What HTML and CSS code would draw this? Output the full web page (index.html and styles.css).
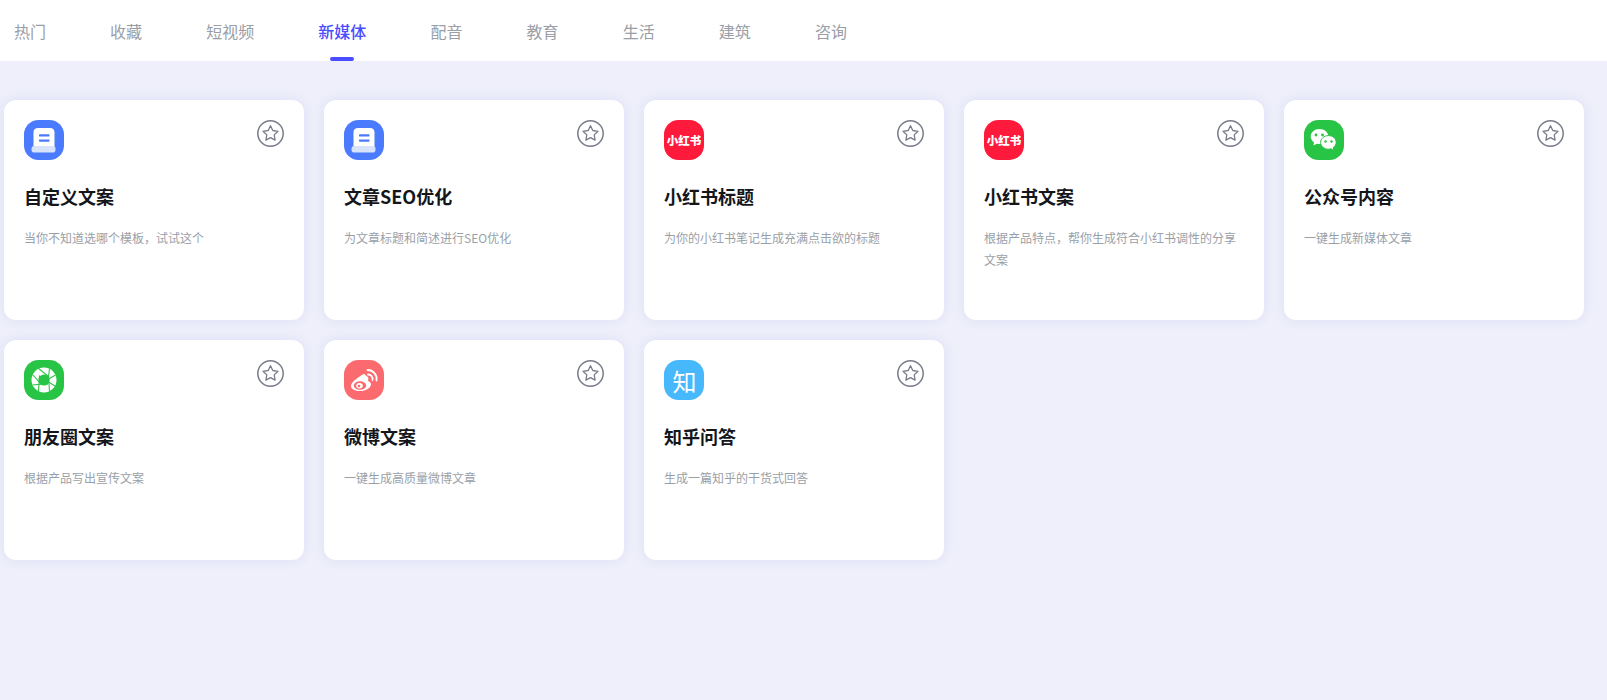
FILE: index.html
```html
<!DOCTYPE html>
<html lang="zh-CN">
<head>
<meta charset="utf-8">
<title>新媒体</title>
<link rel="stylesheet" href="styles.css">
</head>
<body>
<svg class="defs" width="0" height="0" aria-hidden="true">
  <symbol id="star" viewBox="0 0 27 27">
    <circle cx="13.5" cy="13.5" r="12.7" fill="none" stroke="#767c87" stroke-width="1.5"/>
    <path d="M13.5 5.800l2.300 4.700 5.200.8-3.800 3.600.9 5.200-4.600-2.500-4.600 2.500.9-5.200L6 11.300l5.200-.8z" fill="none" stroke="#767c87" stroke-width="1.300" stroke-linejoin="round"/>
  </symbol>
  <symbol id="doc" viewBox="0 0 40 40">
    <rect width="40" height="40" rx="14.500" fill="#4a7bff"/>
    <path d="M9.500 28V12.500Q9.500 8 14 8h12Q30.500 8 30.500 12.500V28z" fill="#fff"/>
    <rect x="15" y="14.300" width="10.500" height="2.200" rx=".6" fill="#4a7bff"/>
    <rect x="15" y="19.500" width="10.500" height="2.200" rx=".6" fill="#4a7bff"/>
    <rect x="7.500" y="26" width="24" height="6.500" rx="2.800" fill="#d8e2fb"/>
  </symbol>
  <symbol id="wechat" viewBox="0 0 40 40">
    <rect width="40" height="40" rx="14.500" fill="#28c445"/>
    <path d="M15.500 9C10.500 9 6.700 12.300 6.700 16.400c0 2.400 1.300 4.500 3.300 5.900L9.500 25.500l3.200-1.800c.9.200 1.800.3 2.800.3 5 0 8.800-3.400 8.800-7.600S20.500 9 15.500 9z" fill="#fff"/>
    <circle cx="12" cy="15" r="1.400" fill="#28c445"/>
    <circle cx="18.500" cy="15" r="1.400" fill="#28c445"/>
    <path d="M24.500 15.600c-4.400 0-7.900 3-7.900 6.800s3.500 6.800 7.900 6.800c.9 0 1.700-.1 2.500-.4l2.800 1.600-.5-2.900c1.800-1.200 2.900-3.100 2.900-5.100 0-3.800-3.300-6.800-7.700-6.800z" fill="#fff" stroke="#28c445" stroke-width="1"/>
    <circle cx="21.500" cy="21.500" r="1.200" fill="#28c445"/>
    <circle cx="27.500" cy="21.500" r="1.200" fill="#28c445"/>
  </symbol>
  <symbol id="shutter" viewBox="0 0 40 40">
    <rect width="40" height="40" rx="14.500" fill="#28c445"/>
    <circle cx="20" cy="20" r="12.500" fill="#fff"/>
    <g stroke="#28c445" stroke-width="1.100">
      <path d="M24.500 16.500L14.500 8.500"/>
      <path d="M23.500 24.500L25.500 8.800"/>
      <path d="M16 24L31.500 15"/>
      <path d="M15.500 16.500L31 26"/>
      <path d="M15.500 15.500L14.500 31.200"/>
      <path d="M24.500 15.500L25.500 31.200"/>
      <path d="M24 23.500L8.500 25"/>
      <path d="M16.500 23.500L8.500 14.500"/>
    </g>
    <circle cx="20" cy="20" r="5.500" fill="#28c445"/>
  </symbol>
  <symbol id="weibo" viewBox="0 0 40 40">
    <rect width="40" height="40" rx="14.500" fill="#fb6a6e"/>
    <path d="M20.500 14c-1 0-2.500.8-4.500 2.200-5 3.300-9 6.800-9 9.800 0 3.200 4.500 5 9 5 6 0 11-3.300 11-6.800 0-2-1.700-2.900-3-3.300.6-1.600.6-3.200-.3-4-.8-.9-2.200-1.200-3.200-2.900z" fill="#fff"/>
    <ellipse cx="16" cy="25.500" rx="6.200" ry="4.300" fill="#fb6a6e"/>
    <ellipse cx="15.500" cy="25.800" rx="3.300" ry="2.700" fill="#fff"/>
    <circle cx="15" cy="26" r="1.300" fill="#fb6a6e"/>
    <path d="M24 14.500a4.500 4.500 0 0 1 4.500 5.500M23.500 10a9 9 0 0 1 9 10.500" fill="none" stroke="#fff" stroke-width="1.800" stroke-linecap="round"/>
  </symbol>
</svg>

<nav class="tabs">
  <a class="tab">热门</a>
  <a class="tab">收藏</a>
  <a class="tab">短视频</a>
  <a class="tab active">新媒体</a>
  <a class="tab">配音</a>
  <a class="tab">教育</a>
  <a class="tab">生活</a>
  <a class="tab">建筑</a>
  <a class="tab">咨询</a>
</nav>

<main class="grid">
  <article class="card">
    <div class="card-top">
      <svg class="icon"><use href="#doc"/></svg>
      <svg class="fav"><use href="#star"/></svg>
    </div>
    <h3 class="title">自定义文案</h3>
    <p class="desc">当你不知道选哪个模板，试试这个</p>
  </article>
  <article class="card">
    <div class="card-top">
      <svg class="icon"><use href="#doc"/></svg>
      <svg class="fav"><use href="#star"/></svg>
    </div>
    <h3 class="title">文章SEO优化</h3>
    <p class="desc">为文章标题和简述进行SEO优化</p>
  </article>
  <article class="card">
    <div class="card-top">
      <span class="icon badge red">小红书</span>
      <svg class="fav"><use href="#star"/></svg>
    </div>
    <h3 class="title">小红书标题</h3>
    <p class="desc">为你的小红书笔记生成充满点击欲的标题</p>
  </article>
  <article class="card">
    <div class="card-top">
      <span class="icon badge red">小红书</span>
      <svg class="fav"><use href="#star"/></svg>
    </div>
    <h3 class="title">小红书文案</h3>
    <p class="desc">根据产品特点，帮你生成符合小红书调性的分享文案</p>
  </article>
  <article class="card">
    <div class="card-top">
      <svg class="icon"><use href="#wechat"/></svg>
      <svg class="fav"><use href="#star"/></svg>
    </div>
    <h3 class="title">公众号内容</h3>
    <p class="desc">一键生成新媒体文章</p>
  </article>
  <article class="card">
    <div class="card-top">
      <svg class="icon"><use href="#shutter"/></svg>
      <svg class="fav"><use href="#star"/></svg>
    </div>
    <h3 class="title">朋友圈文案</h3>
    <p class="desc">根据产品写出宣传文案</p>
  </article>
  <article class="card">
    <div class="card-top">
      <svg class="icon"><use href="#weibo"/></svg>
      <svg class="fav"><use href="#star"/></svg>
    </div>
    <h3 class="title">微博文案</h3>
    <p class="desc">一键生成高质量微博文章</p>
  </article>
  <article class="card">
    <div class="card-top">
      <span class="icon badge blue">知</span>
      <svg class="fav"><use href="#star"/></svg>
    </div>
    <h3 class="title">知乎问答</h3>
    <p class="desc">生成一篇知乎的干货式回答</p>
  </article>
</main>
</body>
</html>
```

FILE: styles.css
```css
* { box-sizing: border-box; }

html, body {
  margin: 0;
  height: 100%;
}

body {
  background: #eeeffa;
  font-family: "Noto Sans CJK SC", "Liberation Sans", sans-serif;
  overflow: hidden;
}

.defs { position: absolute; }

.tabs {
  display: flex;
  gap: 64.1px;
  height: 61px;
  padding-left: 14px;
  background: #fff;
}

.tab {
  position: relative;
  font-size: 16px;
  line-height: 62px;
  color: #9a9ea6;
}

.tab.active {
  color: #4a4dff;
  font-weight: 500;
}

.tab.active::after {
  content: "";
  position: absolute;
  left: 12px;
  bottom: 0;
  width: 24px;
  height: 4px;
  border-radius: 2px;
  background: #4a4dff;
}

.grid {
  display: grid;
  grid-template-columns: repeat(5, 300px);
  grid-auto-rows: 220px;
  gap: 20px;
  padding: 39px 0 0 4px;
}

.card {
  padding: 20px;
  background: #fff;
  border-radius: 12px;
  box-shadow: 0 0 12px rgba(90, 90, 220, .1);
}

.card-top {
  display: flex;
  justify-content: space-between;
  align-items: flex-start;
  height: 40px;
}

.icon {
  display: block;
  width: 40px;
  height: 40px;
}

.fav {
  display: block;
  width: 27px;
  height: 27px;
}

.badge {
  display: flex;
  align-items: center;
  justify-content: center;
  border-radius: 14.5px;
  color: #fff;
  white-space: nowrap;
}

.badge.red {
  background: #ff1a3c;
  font-size: 11.5px;
  font-weight: 900;
}

.badge.blue {
  background: #46b8fb;
  font-size: 24px;
  padding-left: 1px;
}

.title {
  margin: 23px 0 0;
  font-size: 18px;
  line-height: 26px;
  font-weight: 700;
  color: #14161a;
}

.desc {
  margin: 18px 0 0;
  font-size: 12px;
  line-height: 22px;
  color: #9a9fa8;
}
```
